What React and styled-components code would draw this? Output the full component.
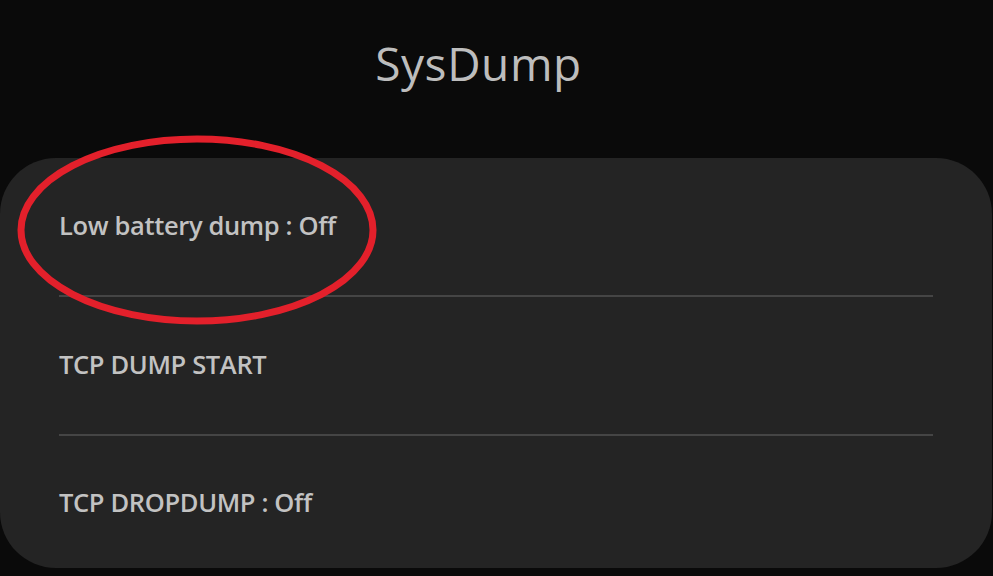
import React from "react";
import styled, { createGlobalStyle } from "styled-components";

const Global = createGlobalStyle`
  html, body { margin: 0; padding: 0; background: #0a0a0a; }
  body { font-family: "Open Sans", "Noto Sans", sans-serif; }
`;

const Page = styled.div`
  width: 993px;
  height: 576px;
  background: #0a0a0a;
  overflow: hidden;
  position: relative;
`;

const Header = styled.header`
  height: 158px;
  display: flex;
  align-items: flex-start;
  justify-content: center;
  padding-right: 36px;
  box-sizing: border-box;
`;

const Title = styled.h1`
  margin: 32px 0 0;
  font-size: 46px;
  font-weight: 400;
  color: #bdbdbd;
  letter-spacing: 0.6px;
`;

const Card = styled.section`
  width: 992px;
  height: 410px;
  background: #242424;
  border-radius: 56px;
  display: flex;
  flex-direction: column;
  padding: 0 59px;
  box-sizing: border-box;
`;

const Row = styled.div`
  height: ${(p) => p.$h}px;
  display: flex;
  align-items: center;
  font-size: 25.5px;
  font-weight: 600;
  color: #c2c2c2;
  border-bottom: ${(p) => (p.$divider ? "2px solid #454545" : "none")};
  box-sizing: border-box;
  letter-spacing: -0.35px;
  padding-bottom: ${(p) => (p.$divider ? 4 : 0)}px;
`;

const Highlight = styled.svg`
  position: absolute;
  left: 0;
  top: 120px;
  pointer-events: none;
`;

export default function App() {
  return (
    <Page>
      <Global />
      <Header>
        <Title>SysDump</Title>
      </Header>
      <Card>
        <Row $h={139} $divider>Low battery dump : Off</Row>
        <Row $h={139} $divider>TCP DUMP START</Row>
        <Row $h={132}>TCP DROPDUMP : Off</Row>
      </Card>
      <Highlight width="400" height="220" viewBox="0 0 400 220">
        <ellipse cx="197" cy="110" rx="176" ry="91" fill="none" stroke="#e3202b" strokeWidth="7" />
      </Highlight>
    </Page>
  );
}
